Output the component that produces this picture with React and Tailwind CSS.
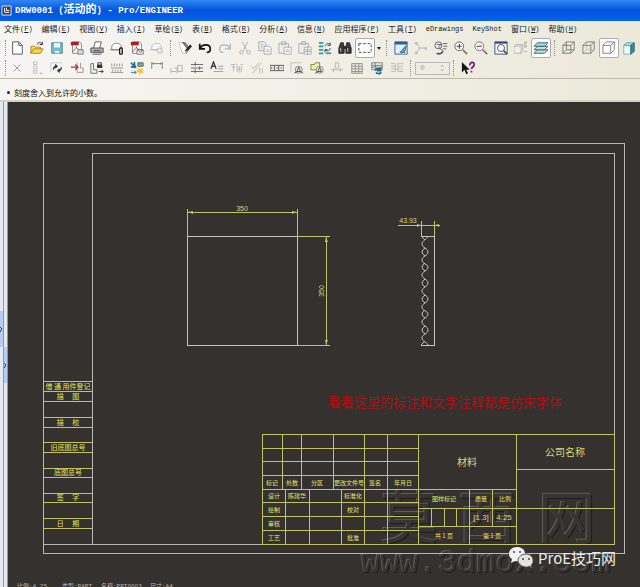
const CJK = "font-['Noto_Sans_CJK_SC',sans-serif]";

const MENUS = [
  ["文件", "F"], ["编辑", "E"], ["视图", "V"], ["插入", "I"], ["草绘", "S"],
  ["表", "B"], ["格式", "R"], ["分析", "A"], ["信息", "N"], ["应用程序", "P"],
  ["工具", "T"], ["eDrawings", ""], ["KeyShot", ""], ["窗口", "W"], ["帮助", "H"],
];

/* ---------- toolbar icons, all on a 16x16 grid ---------- */

const ICONS = {
  new: <path d="M3 1h7l4 4v10H3zM10 1v4h4" fill="#fff" stroke="#444a5c" />,
  open: (
    <>
      <path d="M1 14V6h4l1 1h6v2" fill="#f3df6a" stroke="#9a8420" />
      <path d="M1 14l3-5h11l-3 5z" fill="#f9d93a" stroke="#9a8420" />
      <path d="M8 4c1-3 5-3 6 0m0-3v3h-3" stroke="#222" />
    </>
  ),
  save: (
    <>
      <path d="M2 2h12v12H2z" fill="#6cc4d4" stroke="#3a7f96" />
      <path d="M4 2h8v6H4zM5 11h6v3H5z" fill="#f4fbfc" stroke="#73aebb" />
    </>
  ),
  pdfPage: (
    <>
      <path d="M3 1h8l2 2v11H3z" fill="#fff" stroke="#777" />
      <path d="M1 1h9v4H1z" fill="#a3222a" />
      <path d="M3 12c4-3 5-5 4-6m0 1c1 2 3 3 5 3" stroke="#b52a34" />
      <path d="M9 10h6v5H9z" fill="#d7e6e2" stroke="#5d7b78" />
    </>
  ),
  print: (
    <>
      <path d="M4 8l2-7h7l-2 7" fill="#fff" stroke="#555" />
      <path d="M1 8h14v5H1z" fill="#b5b5b8" stroke="#44444a" />
      <path d="M4 11h8M3 15h10" stroke="#44444a" />
    </>
  ),
  mailLock: (
    <>
      <path d="M2 10V7c0-6 11-6 11 0v3z" fill="#fff" stroke="#777" />
      <path d="M0 10h10" stroke="#777" />
      <rect x="11" y="8" width="3" height="7" rx="1" fill="#fff" stroke="#111" strokeWidth="1.5" />
    </>
  ),
  pdfMail: (
    <>
      <path d="M3 1h8l2 2v11H3z" fill="#fff" stroke="#777" />
      <path d="M1 1h9v4H1z" fill="#a3222a" />
      <path d="M3 12c4-3 5-5 4-6m0 1c1 2 3 3 5 3" stroke="#b52a34" />
      <path d="M8 10h7v5H8zl4 3 3-3" fill="#fff" stroke="#666" />
    </>
  ),
  mailWeb: (
    <>
      <path d="M2 10V7c0-6 11-6 11 0v3z" fill="#f7f7f7" stroke="#b8b8b8" />
      <path d="M0 10h8" stroke="#b8b8b8" />
      <circle cx="11" cy="11" r="3" fill="#eee" stroke="#b0b0b0" />
    </>
  ),
  regenerate: (
    <>
      <path d="M1 2h5l4 3v9H5z" fill="#fff" stroke="#bbb" />
      <path d="M4 1h4l5 6-2 3z" fill="#777" />
      <path d="M9 12l6-7" stroke="#26261c" strokeWidth="3" />
      <path d="M9 14l2-3" stroke="#b7a638" strokeWidth="2" />
    </>
  ),
  undo: <path d="M2 3v6h6M2 9c3-6 12-6 12 0 0 3-2 4-4 4" stroke="#151515" strokeWidth="2" />,
  redo: <path d="M14 3v6H8m6 0C11 3 2 3 2 9c0 3 2 4 4 4" stroke="#b4b4b4" strokeWidth="1.5" />,
  cut: (
    <>
      <path d="M5 1l5 10M11 1L6 11" stroke="#aaa" />
      <circle cx="4" cy="13" r="2" stroke="#aaa" />
      <circle cx="12" cy="13" r="2" stroke="#aaa" />
    </>
  ),
  copy: (
    <>
      <path d="M1 1h6l2 2v8H1z" fill="#f4f4f4" stroke="#a4a4a4" />
      <path d="M7 6h6l2 2v7H7z" fill="#f8f8f8" stroke="#a4a4a4" />
      <path d="M3 4h3M3 6h3M3 8h3M9 10h4M9 12h4" stroke="#b4b4b4" />
    </>
  ),
  paste: (
    <>
      <path d="M1 3h11v11H1z" fill="#eee" stroke="#a8a8a8" />
      <path d="M4 1h5v3H4z" fill="#ddd" stroke="#a8a8a8" />
      <path d="M7 7h8v8H7zM9 10h4M9 12h4" fill="#fafafa" stroke="#a8a8a8" />
    </>
  ),
  pasteSpecial: (
    <>
      <path d="M1 3h11v11H1z" fill="#eee" stroke="#a8a8a8" />
      <path d="M4 1h5v3H4z" fill="#ddd" stroke="#a8a8a8" />
      <path d="M7 7h8v8H7zM7 10h8M7 12h8M11 7v8" fill="#fafafa" stroke="#a8a8a8" />
    </>
  ),
  modelTree: (
    <>
      <path d="M1 2h5M1 6h5M1 10h5M1 14h5" stroke="#2d9aa0" strokeWidth="2" />
      <path d="M8 6c1-3 4-4 6-2m0-2v3h-3M14 8c0 3-4 4-6 2m0 3v-3h3" stroke="#17364f" />
      <path d="M9 14h6" stroke="#2d9aa0" strokeWidth="2" />
    </>
  ),
  find: (
    <>
      <path d="M3 2h3l1 5v7H1V8zM10 2h3l2 6v6H9V7z" fill="#3b3b40" stroke="#222" />
      <path d="M6 6h4v3H6z" fill="#222" />
      <path d="M3 8v4M11 8v4" stroke="#c9c9d0" />
    </>
  ),
  select: <path d="M1 3h14v10H1z" stroke="#333" strokeDasharray="3 2" />,
  repaint: (
    <>
      <path d="M1 1h14v14H1z" fill="#dfeefa" stroke="#2f5d93" />
      <path d="M1 1h14v3H1z" fill="#2f5d93" />
      <path d="M7 13l7-8-2 8z" fill="#6aa9b8" stroke="#31617f" />
    </>
  ),
  spin: (
    <>
      <path d="M3 3l4 5h5M7 8l-4 5" stroke="#aaa" />
      <path d="M1 1h3v3H1zM12 7h3v3h-3zM1 12h3v3H1z" fill="#bbb" />
    </>
  ),
  orient: (
    <>
      <circle cx="5" cy="5" r="4" fill="#f4f4f4" stroke="#555" />
      <path d="M3 4h5l-3 3 6 5M10 3h5M11 6h4M10 9h4" stroke="#555" />
      <path d="M3 14c2 1 6 1 7-2" stroke="#3e6070" strokeWidth="2" />
    </>
  ),
  zoomIn: (
    <>
      <circle cx="6" cy="6" r="5" fill="#fff" stroke="#555" />
      <path d="M3 6h6M6 3v6" stroke="#222" />
      <path d="M10 10l5 5" stroke="#8c6c60" strokeWidth="2" />
    </>
  ),
  zoomOut: (
    <>
      <circle cx="6" cy="6" r="5" fill="#fff" stroke="#666" />
      <path d="M3 6h6" stroke="#222" />
      <path d="M10 10l5 5" stroke="#8c6c60" strokeWidth="2" />
    </>
  ),
  refit: (
    <>
      <path d="M1 1h14v14H1z" fill="#f5f9ff" stroke="#2c4a78" />
      <path d="M1 1h14v2H1z" fill="#2c4a78" />
      <circle cx="8" cy="8" r="4" fill="#fff" stroke="#444" />
      <path d="M11 11l4 4" stroke="#555" strokeWidth="2" />
    </>
  ),
  viewList: (
    <>
      <path d="M0 6h8v8H0zl2-2h8v8l-2 2M8 6l2-2" fill="#f0f0ee" stroke="#b0b0ac" />
      <path d="M12 1h2v2h-2zM12 5h2v2h-2zM12 12h3" stroke="#aaa" />
    </>
  ),
  layers: (
    <>
      <path d="M0 14l4-4h12l-4 4z" fill="#bfe3dc" stroke="#335c60" />
      <path d="M0 10l4-4h12l-4 4z" fill="#bfe3dc" stroke="#335c60" />
      <path d="M0 6l4-4h12l-4 4z" fill="#a5dbd2" stroke="#335c60" />
    </>
  ),
  wireframe: <path d="M1 5h9v9H1zL5 1h9v9l-4 4M10 5l4-4M5 1v9h9M1 14l4-4" stroke="#777" />,
  hidden: (
    <>
      <path d="M5 1v9h9M1 14l4-4" stroke="#c2c2c2" />
      <path d="M1 5h9v9H1zL5 1h9v9l-4 4M10 5l4-4" stroke="#777" />
    </>
  ),
  noHidden: <path d="M1 5h9v9H1zL5 1h9v9l-4 4M10 5l4-4" fill="#fff" stroke="#777" />,
  shaded: (
    <>
      <path d="M2 5h8v10H2z" fill="#eefafa" stroke="#7fb0b5" />
      <path d="M2 5l3-3h9l-4 3z" fill="#b5e2e4" stroke="#5c9ba3" />
      <path d="M10 5l4-3v10l-4 3z" fill="#2f8f98" stroke="#2a6f78" />
    </>
  ),
  erase: <path d="M4 4l8 8M12 4l-8 8" stroke="#8e8e8e" />,
  stack: (
    <>
      <path d="M4 1h4v3H4zM4 6h4v3H4zM4 11h4v3H4z" stroke="#bdbdbd" />
      <path d="M11 14h3" stroke="#999" />
    </>
  ),
  update: (
    <>
      <path d="M1 2h13M1 2v11" stroke="#c9c9c9" />
      <path d="M4 10c0-3 1-4 4-4M6 4l2 2-2 2M13 7c0 3-1 4-4 4m2 2l-2-2 2-2" stroke="#26364a" strokeWidth="1.5" />
    </>
  ),
  moveView: (
    <>
      <path d="M8 2v11h7V8h-3V2" stroke="#a88" />
      <path d="M1 7h8M6 4l3 3-3 3" stroke="#a8322f" strokeWidth="1.5" />
    </>
  ),
  lockView: (
    <>
      <path d="M1 3v11h7v-4H4V3z" stroke="#666" />
      <path d="M8 4h6v4H8z" fill="#333" />
      <path d="M9 4V2h4v2M10 12h5m-2-2l2 2-2 2" stroke="#333" />
    </>
  ),
  hatch: <path d="M2 3v3M5 3v3M8 3v3M11 3v3M14 3v3M1 8h14M1 13h14M3 10v2M6 10v2M9 10v2M12 10v2" stroke="#888" />,
  cleanup: (
    <>
      <path d="M1 2l6 6M1 7l6-1M5 1v7" stroke="#236a98" strokeWidth="2" />
      <path d="M9 2h6v4H9z" fill="#8aa9b3" stroke="#43606c" />
      <path d="M1 13h6m-2-2l2 2-2 2" stroke="#2a6d8c" />
      <path d="M11 6l1 3 3-1-1 3 2 2-4 1-1 2-1-3-3-1 2-2-1-2 3 1z" fill="#f4c62c" />
    </>
  ),
  dim: <path d="M2 1v8M14 1v8M2 3h12M4 2v2M12 2v2" stroke="#777" />,
  ordinate: <path d="M1 8v6M1 12h6M5 8h3v6M9 5h5v7H9z" stroke="#ababab" />,
  grid: <path d="M1 4h14M1 8h14M1 12h14M6 1v5M6 9v5M11 6v4" stroke="#5e5e5e" />,
  note: (
    <>
      <path d="M1 9l3-8 3 8M2 6h4" stroke="#3a3a3a" strokeWidth="1.5" />
      <path d="M9 6h6M9 9h6M4 12h11" stroke="#999" />
    </>
  ),
  symbol: <path d="M1 4h5M2 7h4M4 4v8M8 3v9l3-6v7M12 4h3M13 6v7" stroke="#b6b6b6" />,
  surface: <path d="M2 6l2 3 6-7M3 14l10-12M11 8v6M14 8v6" stroke="#b6b6b6" />,
  tolerance: <path d="M0 5h16v6H0zM5 5v6M10 5v6M2 7v2M7 8h2M12 8h2" stroke="#4d4d4d" />,
  drawGroup: (
    <>
      <path d="M1 2h12M1 2v11" stroke="#bdbdbd" />
      <circle cx="10" cy="10" r="4" stroke="#777" />
      <path d="M8 12l2-5 2 5zM5 14l3-2M12 12l3 2" stroke="#444" />
    </>
  ),
  folderGroup: (
    <>
      <path d="M1 4h4l1-2h5v8H1z" fill="#f6f3a0" stroke="#6c8040" />
      <circle cx="11" cy="10" r="4" fill="#eee" stroke="#777" />
      <path d="M9 12l2-5 2 5zM6 14l3-2" stroke="#444" />
    </>
  ),
  datum: <path d="M6 2h4v6H6zM1 10h9M4 8v5M10 10h5M12 8v4" stroke="#b4b4b4" />,
  table: <path d="M2 3h12v11H2zM2 6h12M2 9h12M2 12h12M6 3v11M10 3v11" stroke="#8a8a8a" />,
  tableUpdate: (
    <>
      <path d="M2 2h12v8H2zM2 5h12M2 7h12M6 2v8" stroke="#777" />
      <path d="M6 11c1-3 4-3 5-1M12 7v4H8M13 13c-2 2-5 2-6 0" stroke="#226b8a" strokeWidth="2" />
    </>
  ),
  tableMerge: <path d="M1 3h5v9H1M15 3H9v9h6M1 6h5M1 9h14M9 6h6" stroke="#b8b8b8" />,
  help: (
    <>
      <path d="M1 1v12l3-3 2 5 2-1-2-4h4z" fill="#151515" />
      <path d="M10 5c0-5 6-4 5 0-1 2-3 2-3 4M12 11v2" stroke="#74217f" strokeWidth="2" />
    </>
  ),
};

const FILE_TOOLS = ["new", "open", "save", "pdfPage", "print", "mailLock", "pdfMail", "mailWeb"];
const EDIT_TOOLS = ["regenerate", "undo", "redo", "cut", "copy", "paste", "pasteSpecial", "modelTree", "find"];
const VIEW_TOOLS = ["repaint", "spin", "orient", "zoomIn", "zoomOut", "refit", "viewList", "layers"];
const DISPLAY_TOOLS = ["wireframe", "hidden", "noHidden", "shaded"];
const DRAW_TOOLS = [
  "erase", "stack", "update", "moveView", "lockView", "hatch", "cleanup", "dim", "ordinate", "grid",
  "note", "symbol", "surface", "tolerance", "drawGroup", "folderGroup", "datum", "table", "tableUpdate", "tableMerge",
];
const ACTIVE = ["select", "layers", "noHidden"];

function Tool({ name }) {
  const active = ACTIVE.includes(name);
  return (
    <button
      type="button"
      aria-label={name}
      aria-pressed={active}
      className={
        active
          ? "flex h-5 w-5 shrink-0 items-center justify-center rounded-xs border border-[#a9adb8] bg-white"
          : "flex h-5 w-5 shrink-0 items-center justify-center"
      }
    >
      <svg viewBox="0 0 16 16" className="h-[14px] w-[14px] shrink-0" fill="none">
        {ICONS[name]}
      </svg>
    </button>
  );
}

function Tools({ names }) {
  return names.map((n) => <Tool key={n} name={n} />);
}

function Grip() {
  return <span className="mr-1 ml-[3px] h-4 shrink-0 border-l border-dotted border-[#8f8d84]" />;
}

function TitleBar() {
  return (
    <header className="flex h-[21px] items-center gap-[3px] bg-linear-to-b from-[#2f86f4] via-[#0453dc] to-[#0562f0] pl-px text-white">
      <svg viewBox="0 0 12 12" className="h-[11px] w-[11px]" fill="none">
        <path d="M1 1h10v10H1z" fill="#39424f" stroke="#e8eefa" />
        <path d="M4 3v5h5M6 3v3h3" stroke="#fff" />
      </svg>
      <h1 className="font-['Liberation_Mono','Noto_Sans_CJK_SC',monospace] text-[9px] font-bold whitespace-pre">
        DRW0001 (<span className="text-[11px]">活动的</span>) - Pro/ENGINEER
      </h1>
    </header>
  );
}

function MenuBar() {
  return (
    <nav className="flex h-4 items-center gap-px overflow-hidden">
      {MENUS.map(([label, key]) => (
        <button key={label} type="button" className="flex shrink-0 items-center px-1 leading-4 text-[#1a1a1a]">
          <span
            className={
              key
                ? "font-['Noto_Sans_CJK_SC',sans-serif] text-[8px]"
                : "font-['Liberation_Mono',monospace] text-[7px]"
            }
          >
            {label}
          </span>
          {key && (
            <span className="font-['Liberation_Mono',monospace] text-[7px]">
              (<u>{key}</u>)
            </span>
          )}
        </button>
      ))}
    </nav>
  );
}

function Toolbars() {
  return (
    <div className="border-b border-[#bdbaac] pb-px pl-[5px]">
      <div className="flex h-[22px] items-center">
        <span className="mr-px h-4 shrink-0 border-l border-dotted border-[#8f8d84]" />
        <Tools names={FILE_TOOLS} />
        <Grip />
        <Tools names={EDIT_TOOLS} />
        <Tool name="select" />
        <button type="button" aria-label="选取选项" className="flex h-5 w-2 shrink-0 items-center justify-center">
          <svg viewBox="0 0 4 3" className="h-[3px] w-1">
            <path d="M0 0h4L2 3z" fill="#222" />
          </svg>
        </button>
        <Grip />
        <Tools names={VIEW_TOOLS} />
        <Grip />
        <Tools names={DISPLAY_TOOLS} />
      </div>
      <div className="flex h-[18px] items-center">
        <span className="mr-px h-4 shrink-0 border-l border-dotted border-[#8f8d84]" />
        <Tools names={DRAW_TOOLS} />
        <Grip />
        <label className="flex h-[13px] w-[35px] shrink-0 items-center border border-[#b9bbc0] px-1">
          <input
            type="text"
            aria-label="数值"
            defaultValue="0"
            disabled
            className="w-full min-w-0 bg-transparent font-['Liberation_Mono',monospace] text-[8px] text-[#aaa]"
          />
          <svg viewBox="0 0 5 8" className="h-2 w-[5px] shrink-0" fill="none" stroke="#b5b5b5">
            <path d="M1 3l1-2 2 2M1 5l1 2 2-2" />
          </svg>
        </label>
        <Grip />
        <Tool name="help" />
      </div>
    </div>
  );
}

/* ---------- drawing sheet, in window coordinates ---------- */

const YELLOW = "#c2c266";

const SIDE_LINES = [381, 391, 401, 417, 427, 442, 452, 468, 477, 493, 502, 518, 528];

const SIDE_LABELS = [
  ["借 通 用件登记", 389],
  ["描\u3000 图", 399],
  ["描\u3000 校", 425],
  ["旧底图总号", 450],
  ["底图总号", 475],
  ["签\u3000 字", 500],
  ["日\u3000 期", 526],
];

// x1, y1, x2, y2
const BLOCK_LINES = [
  [262, 434, 614, 434], [262, 448, 418, 448], [262, 461, 418, 461], [262, 475, 418, 475],
  [262, 489, 516, 489], [262, 502, 418, 502], [262, 516, 418, 516], [262, 530, 418, 530],
  [262, 544, 614, 544], [418, 508, 614, 508], [418, 526, 516, 526], [516, 469, 614, 469],
  [262, 434, 262, 544], [282, 434, 282, 489], [301, 434, 301, 489], [333, 434, 333, 489],
  [364, 434, 364, 544], [387, 434, 387, 544], [418, 434, 418, 544], [285, 489, 285, 544],
  [309, 489, 309, 544], [341, 489, 341, 544], [516, 434, 516, 544], [614, 434, 614, 544],
  [431, 508, 431, 526], [444, 508, 444, 526], [456, 508, 456, 526],
  [469, 489, 469, 544], [492, 489, 492, 526],
];

const BLOCK_LABELS = [
  ["标记", 272, 485], ["处数", 292, 485], ["分区", 317, 485], ["更改文件号", 349, 485],
  ["签名", 375, 485], ["年月日", 403, 485],
  ["设计", 274, 498], ["陈建华", 297, 498], ["标准化", 353, 498],
  ["绘制", 274, 512], ["校对", 353, 512], ["审核", 274, 526],
  ["工艺", 274, 540], ["批准", 353, 540],
  ["图样标记", 444, 501], ["质量", 481, 501], ["比例", 505, 501],
  ["共 1 页", 444, 538], ["第 1 页", 492, 538],
];

const WAVE_CENTERS = [252, 267, 283, 299, 314, 330];

function Watermark() {
  return (
    <g
      fill="#383532"
      opacity="0.8"
      className="[filter:drop-shadow(-1px_-1px_0_#6a6864)_drop-shadow(1px_1px_0_#1a1815)]"
    >
      <g className={CJK} fontSize="58">
        <text x="380" y="539">莫</text>
        <text x="458" y="539">西</text>
        <text x="538" y="539">网</text>
      </g>
      <text x="361" y="572" fontSize="32" className="font-['Liberation_Mono',monospace]">
        www.3dmox.com
      </text>
    </g>
  );
}

function FrontView() {
  return (
    <g shapeRendering="crispEdges">
      <path d="M187 236H297V345H187z" stroke="#c4c3bf" />
      <g stroke={YELLOW}>
        <path d="M187 209V236M297 209V236M187 212H297" />
        <path d="M297 236H330M297 345H330M326 236V345" />
      </g>
      <g fill={YELLOW} shapeRendering="auto">
        <path d="M188 212l5-1v3zM297 212l-5-1v3zM326 237l-1 5h3zM326 345l-1-5h3z" />
      </g>
    </g>
  );
}

function SideView() {
  return (
    <g>
      <path d="M421 236H434V345H421" stroke="#c4c3bf" shapeRendering="crispEdges" />
      <g stroke="#c4c3bf">
        <path d="M428 236C427 240 422 240 422 244C422 248 428 248 428 252C428 256 422 256 422 260C422 264 428 264 428 267C428 271 422 271 422 275C422 279 428 279 428 283C428 287 422 287 422 291C422 295 428 295 428 299C428 303 422 303 422 307C422 311 428 311 428 314C428 318 422 318 422 322C422 326 428 326 428 330C428 334 422 334 422 338C422 342 427 342 428 345" />
        {WAVE_CENTERS.map((y) => (
          <path key={y} d={`M425 ${y - 4}Q419 ${y} 425 ${y + 4}`} />
        ))}
        <path d="M421 236l4 4M421 345l4-4" />
      </g>
      <path d="M421 221V236M434 221V236M398 225H440" stroke={YELLOW} shapeRendering="crispEdges" />
      <path d="M421 225l-4-1v3zM435 225l4-1v3z" fill={YELLOW} />
    </g>
  );
}

function DrawingSheet() {
  return (
    <svg
      viewBox="8 102 632 485"
      role="img"
      aria-label="工程图"
      fill="none"
      className="block h-auto min-w-0 flex-1 self-start bg-[#34312e]"
    >
      <Watermark />

      <g stroke="#b9b8b3" shapeRendering="crispEdges">
        <path d="M43 143H624V553H43z" />
        <path d="M92 153H614V544H43M92 153V544" />
      </g>

      <FrontView />
      <SideView />
      <g fill="#d6d67c" fontSize="7" textAnchor="middle" className="font-['Liberation_Sans',sans-serif]">
        <text x="242" y="211">350</text>
        <text x="0" y="0" transform="translate(324 291) rotate(-90)">350</text>
        <text x="408" y="223">43.93</text>
      </g>

      {/* revision strip at the left margin */}
      <g stroke={YELLOW} shapeRendering="crispEdges">
        {SIDE_LINES.map((y) => (
          <path key={y} d={`M43 ${y}H92`} />
        ))}
        <path d="M43 381V544" />
      </g>
      <g fill="#e6e653" fontSize="7" textAnchor="middle" className={CJK}>
        {SIDE_LABELS.map(([label, y]) => (
          <text key={label} x="68" y={y}>
            {label}
          </text>
        ))}
      </g>

      {/* title block */}
      <g stroke={YELLOW} shapeRendering="crispEdges">
        {BLOCK_LINES.map(([x1, y1, x2, y2]) => (
          <line key={`${x1}-${y1}-${x2}-${y2}`} x1={x1} y1={y1} x2={x2} y2={y2} />
        ))}
      </g>
      <g fill="#e6e66a" fontSize="6" textAnchor="middle" className={CJK}>
        {BLOCK_LABELS.map(([label, x, y]) => (
          <text key={label} x={x} y={y}>
            {label}
          </text>
        ))}
      </g>
      <g fill="#d8d88a" fontSize="8" textAnchor="middle" className="font-['Liberation_Sans',sans-serif]">
        <text x="481" y="520">[1.3]</text>
        <text x="504" y="520">4:25</text>
      </g>
      <g fill="#d6d67c" fontSize="10" textAnchor="middle" className={CJK}>
        <text x="467" y="466">材料</text>
        <text x="565" y="456">公司名称</text>
      </g>

      <text x="328" y="407" fontSize="13" fill="#a81414" className={CJK}>
        看看这里的标注和文字注释都是仿宋字体
      </text>

      {/* account badge */}
      <g>
        <path d="M517 547c-5 0-8 3-8 7 0 2 1 4 3 5l-1 4 4-2c5 1 10-2 10-7s-4-7-8-7z" fill="#f2f2f0" />
        <path d="M526 554c-4 0-8 3-8 6 0 4 4 7 8 7 1 0 2 0 3-1l3 2-1-3c2-1 2-3 2-5 0-3-3-6-7-6z" fill="#e4e4e2" stroke="#5a5855" />
        <g fill="#4a4845">
          <circle cx="514" cy="552" r="1" />
          <circle cx="520" cy="552" r="1" />
          <circle cx="523" cy="559" r="1" />
          <circle cx="529" cy="559" r="1" />
        </g>
        <text x="538" y="564" fontSize="15" fill="#ecebe8" className={CJK}>
          ProE技巧网
        </text>
      </g>

      <g fill="#b5b3ad" fontSize="6" className="font-['Liberation_Mono','Noto_Sans_CJK_SC',monospace]">
        <text x="17" y="588">比例:4.25</text>
        <text x="62" y="588">类型:PART</text>
        <text x="101" y="588">名称:PRT0003</text>
        <text x="150" y="588">尺寸:A4</text>
      </g>
    </svg>
  );
}

function Sash({ label, offset }) {
  return (
    <div className={`flex w-1 shrink-0 flex-col border-r border-[#8d96ad] bg-[#e6e9f1] ${offset}`}>
      <button
        type="button"
        aria-label={label}
        className="flex h-9 w-full items-center justify-center bg-[#b9ccf6]"
      >
        <svg viewBox="0 0 3 5" className="h-[5px] w-[3px]" fill="none" stroke="#2b3f7a">
          <path d="M0 0l2 2-2 3" />
        </svg>
      </button>
    </div>
  );
}

export default function App() {
  return (
    <div className="flex min-h-screen flex-col overflow-hidden bg-[#34312e]">
      <TitleBar />
      <div className="bg-linear-to-r from-[#f6f5f3] to-[#ece9da]">
        <MenuBar />
        <Toolbars />
        <p
          role="status"
          className="flex h-[23px] items-center gap-1 border-b-2 border-[#d5d2c4] pt-[6px] pl-[7px] font-['Noto_Sans_CJK_SC',sans-serif] text-[8px] text-[#111]"
        >
          <span className="h-[3px] w-[3px] rounded-full bg-[#1c1c6c]" />
          刻度舍入到允许的小数。
        </p>
      </div>
      <main className="flex flex-1">
        <Sash label="展开导航器" offset="pt-[209px]" />
        <Sash label="展开浏览器" offset="pt-[245px]" />
        <DrawingSheet />
      </main>
    </div>
  );
}
